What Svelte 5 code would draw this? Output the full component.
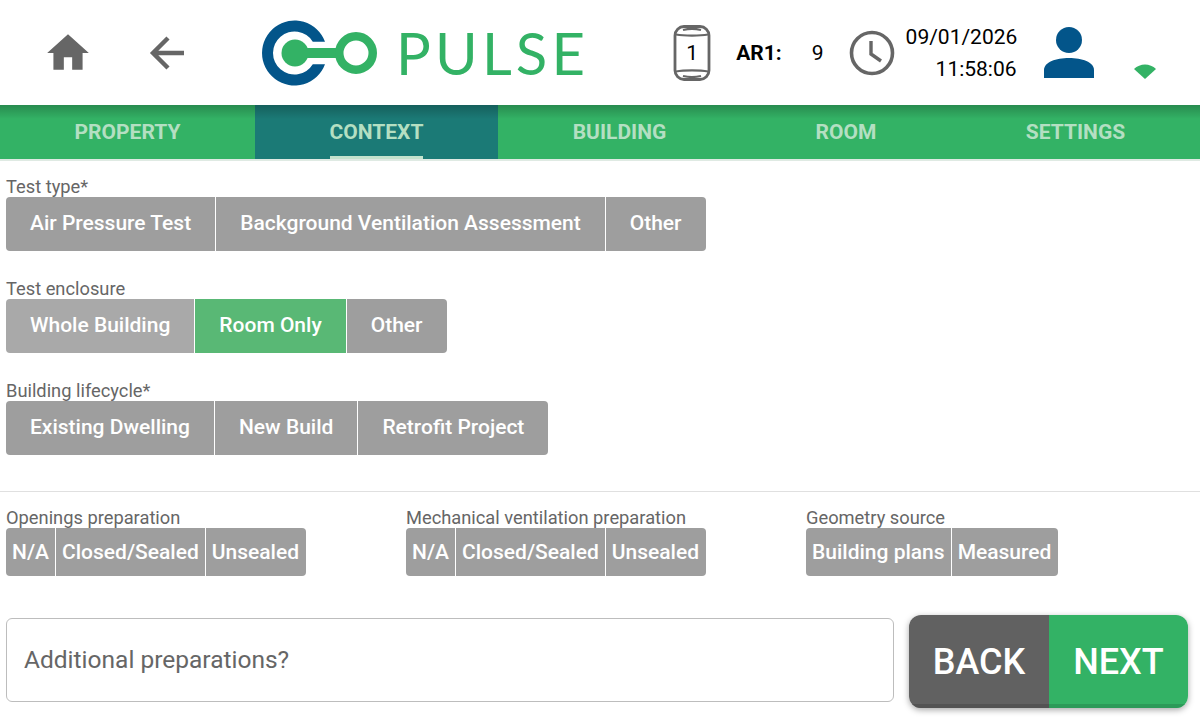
<script>
    let tabs = ["PROPERTY", "CONTEXT", "BUILDING", "ROOM", "SETTINGS"];
    let activeTab = $state("CONTEXT");

    let mainGroups = [
        { label: "Test type*", options: ["Air Pressure Test", "Background Ventilation Assessment", "Other"] },
        { label: "Test enclosure", options: ["Whole Building", "Room Only", "Other"], selected: "Room Only", hover: "Whole Building" },
        { label: "Building lifecycle*", options: ["Existing Dwelling", "New Build", "Retrofit Project"] }
    ];

    let smallGroups = [
        { label: "Openings preparation", options: ["N/A", "Closed/Sealed", "Unsealed"] },
        { label: "Mechanical ventilation preparation", options: ["N/A", "Closed/Sealed", "Unsealed"] },
        { label: "Geometry source", options: ["Building plans", "Measured"] }
    ];
</script>

<div class="page">
    <header class="topbar">
        <button class="icon-btn home" aria-label="Home">
            <svg width="50" height="50" viewBox="0 0 24 24"><path d="M10 20v-6h4v6h5v-8h3L12 3 2 12h3v8z" fill="#666"/></svg>
        </button>
        <button class="icon-btn back" aria-label="Back">
            <svg width="40" height="40" viewBox="0 0 40 40"><path d="M37 20H7M21 5 6 20l15 15" fill="none" stroke="#666" stroke-width="4.4"/></svg>
        </button>

        <div class="logo">
            <svg width="118" height="66" viewBox="0 0 118 66">
                <path d="M63 21.700A32.500 32.500 0 1 0 63 44.300H50.800A21.500 21.500 0 1 1 50.800 21.700Z" fill="#03558a"/>
                <circle cx="33" cy="33" r="13.500" fill="#33b265"/>
                <rect x="40" y="28" width="40" height="10" fill="#33b265"/>
                <circle cx="94" cy="33" r="16.750" fill="none" stroke="#33b265" stroke-width="8.500"/>
            </svg>
            <span class="logo-text">PULSE</span>
        </div>

        <div class="status">
            <div class="can">
                <svg width="38" height="56" viewBox="0 0 38 56">
                    <rect x="2" y="1.500" width="34" height="53" rx="9" fill="none" stroke="#666" stroke-width="2.800"/>
                    <path d="M10 5c6-1.500 12-1.500 18 0M3 9.500c8 1.500 24 1.500 32 0M3 46.500c8-1.500 24-1.500 32 0M10 51c6 1.500 12 1.500 18 0" fill="none" stroke="#666" stroke-width="2.200"/>
                </svg>
                <span class="can-num">1</span>
            </div>
            <span class="ar-label">AR1:</span>
            <span class="ar-value">9</span>
            <svg class="clock" width="46" height="46" viewBox="0 0 46 46">
                <circle cx="23" cy="23" r="20.500" fill="none" stroke="#666" stroke-width="3.600"/>
                <path d="M22 11v13l10 7" fill="none" stroke="#666" stroke-width="3.400"/>
            </svg>
            <div class="datetime">
                <div>09/01/2026</div>
                <div>11:58:06</div>
            </div>
            <svg class="user" width="52" height="54" viewBox="0 0 52 54">
                <circle cx="26" cy="14" r="13" fill="#03558a"/>
                <path d="M1 52V44C1 36 13 32 26 32s25 4 25 12v8z" fill="#03558a"/>
            </svg>
            <svg class="wifi" width="24" height="18" viewBox="0 0 24 18">
                <path d="M1 7C7 1 17 1 23 7L12 17z" fill="#33b265"/>
            </svg>
        </div>
    </header>

    <nav class="tabs">
        {#each tabs as tab}
            <button class="tab" class:active={tab === activeTab} onclick={() => activeTab = tab}>
                <span>{tab}</span>
            </button>
        {/each}
    </nav>

    <main class="content">
        {#each mainGroups as group}
            <section class="field">
                <div class="label">{group.label}</div>
                <div class="group">
                    {#each group.options as option}
                        <button class="opt" class:selected={option === group.selected} class:hover={option === group.hover}>{option}</button>
                    {/each}
                </div>
            </section>
        {/each}

        <hr />

        <div class="small-row">
            {#each smallGroups as group}
                <section class="small-field">
                    <div class="label">{group.label}</div>
                    <div class="group small">
                        {#each group.options as option}
                            <button class="opt">{option}</button>
                        {/each}
                    </div>
                </section>
            {/each}
        </div>

        <div class="bottom-row">
            <input type="text" placeholder="Additional preparations?" />
            <div class="nav-buttons">
                <button class="nav-btn prev">BACK</button>
                <button class="nav-btn next">NEXT</button>
            </div>
        </div>
    </main>
</div>

<style>
    :global(body) {
        margin: 0;
        background: #fff;
        font-family: Roboto, "Liberation Sans", sans-serif;
    }

    button {
        font-family: inherit;
        border: none;
        padding: 0;
    }

    .page {
        width: 1200px;
        height: 720px;
        overflow: hidden;
    }

    .topbar {
        height: 105px;
        display: flex;
        align-items: center;
        background: #fff;
    }

    .icon-btn {
        background: none;
        display: flex;
    }

    .home {
        margin-left: 43px;
    }

    .back {
        margin-left: 54px;
    }

    .logo {
        display: flex;
        align-items: center;
        margin-left: 75px;
    }

    .logo-text {
        font-family: Lato, sans-serif;
        font-size: 58px;
        color: #33b265;
        letter-spacing: 4.2px;
        margin-left: 16px;
        line-height: 1;
    }

    .status {
        display: flex;
        align-items: center;
        margin-left: 84px;
        position: relative;
    }

    .can {
        position: relative;
        display: flex;
    }

    .can-num {
        position: absolute;
        inset: 0;
        display: flex;
        align-items: center;
        justify-content: center;
        font-size: 21px;
    }

    .ar-label {
        font-size: 21px;
        font-weight: 700;
        margin-left: 25px;
    }

    .ar-value {
        font-size: 21px;
        margin-left: 30px;
    }

    .clock {
        margin-left: 25px;
    }

    .datetime {
        font-size: 21px;
        line-height: 32px;
        text-align: right;
        margin-left: 11px;
        width: 111px;
    }

    .user {
        margin-left: 26px;
    }

    .wifi {
        margin-left: 38px;
        margin-top: 36px;
    }

    .tabs {
        height: 54px;
        display: grid;
        grid-template-columns: 255px 243px 243px 210px 249px;
        background: #33b265;
        border-bottom: 2px solid #dfeae3;
        position: relative;
    }

    .tabs::before {
        content: "";
        position: absolute;
        inset: 0 0 auto 0;
        height: 14px;
        background: linear-gradient(rgba(0, 0, 0, 0.22), rgba(0, 0, 0, 0));
        pointer-events: none;
    }

    .tab {
        background: none;
        color: #b4dfc2;
        font-size: 21px;
        font-weight: 700;
        display: flex;
        justify-content: center;
    }

    .tab span {
        display: block;
        height: 51px;
        line-height: 54px;
    }

    .tab.active {
        background: #1b7a76;
    }

    .tab.active span {
        border-bottom: 3px solid #c3e3cd;
    }

    .content {
        padding: 0 6px;
    }

    .field {
        margin-bottom: 12px;
    }

    .label {
        font-size: 18.3px;
        line-height: 16px;
        padding-bottom: 2px;
        color: #666;
    }

    .field .label {
        padding-top: 20px;
        margin-top: -2px;
    }

    .group {
        display: flex;
        width: fit-content;
        border-radius: 4px;
        overflow: hidden;
    }

    .opt {
        height: 54px;
        padding: 0 24px 2px;
        background: #9e9e9e;
        color: #fff;
        font-size: 21px;
        font-weight: 500;
        border-right: 1px solid #fff;
    }

    .opt:last-child {
        border-right: none;
    }

    .opt.selected {
        background: #59b875;
    }

    .opt.hover {
        background: #a9a9a9;
    }

    .group.small .opt {
        height: 48px;
        padding: 0 6px;
    }

    .group.small .opt:last-child {
        padding-right: 7px;
    }

    hr {
        margin: 36px -6px 0;
        border: none;
        border-top: 1px solid #e0e0e0;
    }

    .small-row {
        display: grid;
        grid-template-columns: 400px 400px 388px;
        margin-top: 18px;
    }

    .bottom-row {
        display: flex;
        align-items: flex-start;
        justify-content: space-between;
        margin-top: 39px;
    }

    input {
        width: 888px;
        height: 84px;
        margin-top: 3px;
        box-sizing: border-box;
        border: 1px solid #bdbdbd;
        border-radius: 6px;
        padding: 0 17px 2px;
        font-family: inherit;
        font-size: 24.5px;
        outline: none;
    }

    input::placeholder {
        color: #666;
        opacity: 1;
    }

    .nav-buttons {
        display: flex;
        border-radius: 12px;
        overflow: hidden;
        box-shadow: 0 2px 6px rgba(0, 0, 0, 0.35);
        margin-right: 6px;
    }

    .nav-btn {
        height: 93px;
        color: #fff;
        font-size: 36px;
        font-weight: 500;
    }

    .prev {
        width: 140px;
        background: #616161;
        box-shadow: inset 0 -4px 0 #535353;
    }

    .next {
        width: 139px;
        background: #33b265;
        box-shadow: inset 0 -4px 0 #2c9a58;
    }
</style>
